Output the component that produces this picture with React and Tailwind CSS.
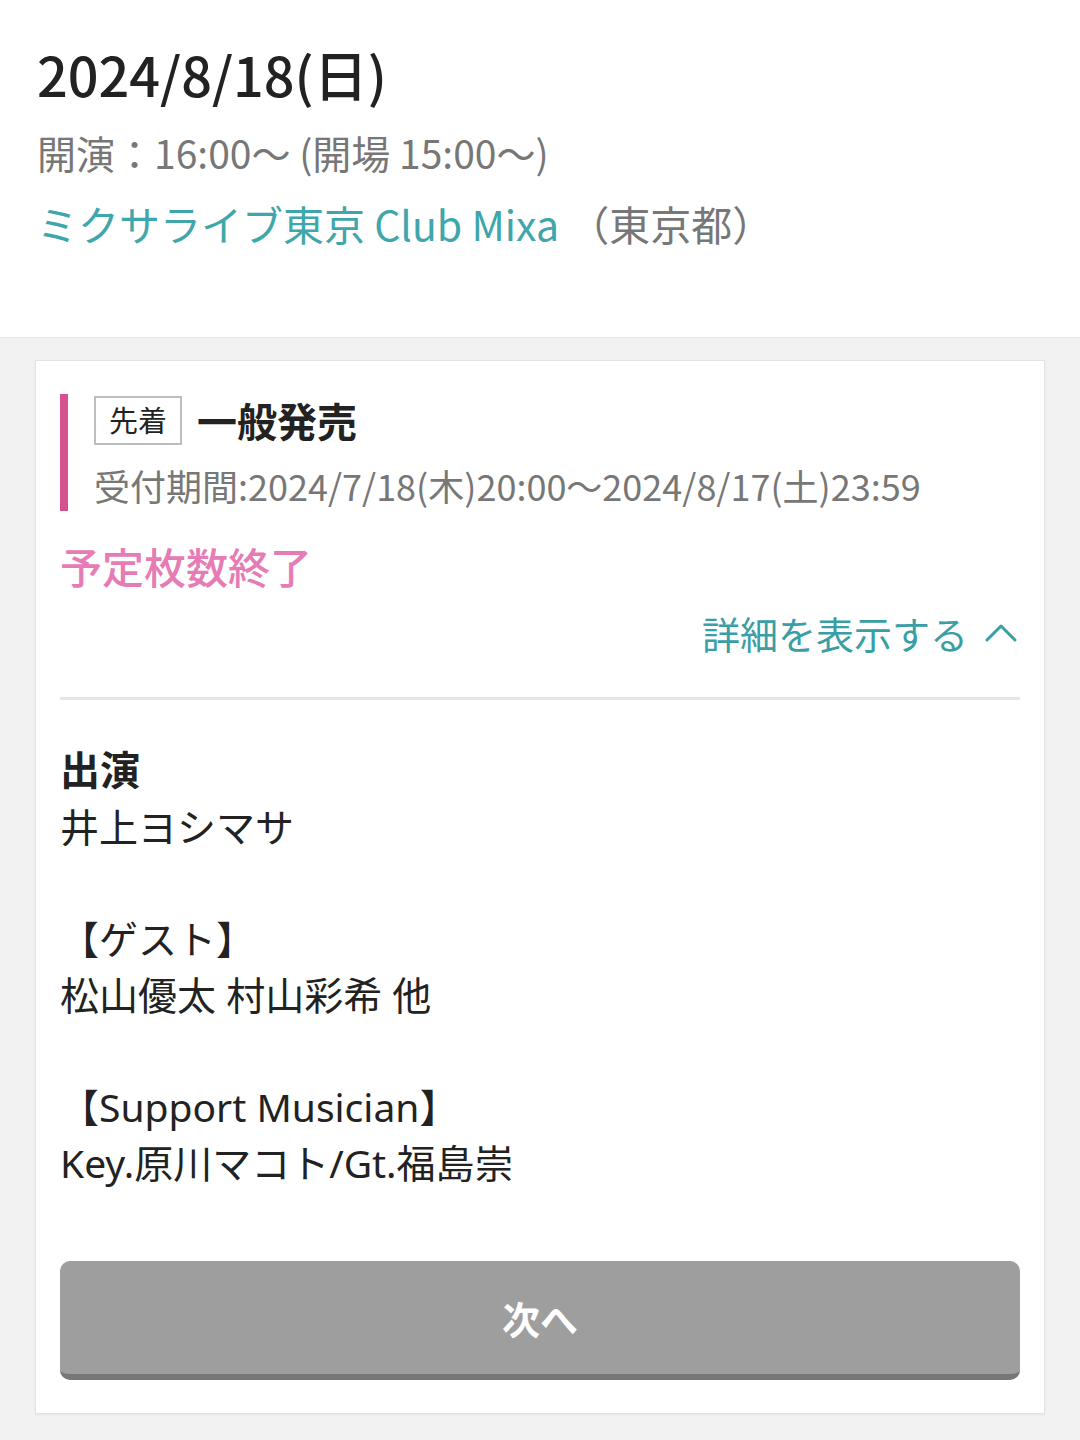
import React from 'react';

const jp = { fontFamily: '"Noto Sans CJK JP", "Noto Sans", sans-serif' };
const body = { fontFamily: '"Noto Sans", "Noto Sans CJK JP", sans-serif' };

const ChevronUp = () => (
  <svg width="34" height="24" viewBox="0 0 34 24" fill="none" className="ml-4">
    <path d="M3 19 L17 5 L31 19" stroke="#3a9ea5" strokeWidth="3" strokeLinecap="round" strokeLinejoin="round" />
  </svg>
);

export default function App() {
  return (
    <div className="w-[1080px] min-h-[1440px] bg-[#f2f2f2]" style={jp}>
      {/* event header */}
      <div className="bg-white pl-[37px] pt-[37px] h-[338px] border-b border-[#e6e6e6]">
        <h1 className="text-[54px] leading-[74px] font-medium text-[#222]">2024/8/18(日)</h1>
        <p className="text-[39px] leading-[52px] mt-[15px] text-[#777]">開演：16:00～ (開場 15:00～)</p>
        <p className="text-[41px] leading-[56px] mt-[17px]">
          <span className="text-[#3fa6ab]">ミクサライブ東京 Club Mixa</span>
          <span className="text-[#777]"> （東京都）</span>
        </p>
      </div>

      {/* ticket card */}
      <div className="pt-[22px] px-[35px] pb-[26px]">
        <div className="bg-white border border-[#e3e3e3] shadow-[0_1px_2px_rgba(0,0,0,0.06)] px-[24px] pt-[33px] pb-[33px]">
          <div className="flex">
            <div className="w-[8px] bg-[#d4508f] shrink-0" />
            <div className="pl-[26px] pt-[1px] pb-[2px]">
              <div className="flex items-center">
                <span className="border-2 border-[#bdbdbd] w-[88px] h-[49px] flex items-center justify-center text-[29px] text-[#222]">先着</span>
                <span className="ml-[15px] text-[40px] font-bold text-[#222] leading-[50px]">一般発売</span>
              </div>
              <p className="text-[36px] leading-[48px] mt-[16px] text-[#777]">受付期間:2024/7/18(木)20:00～2024/8/17(土)23:59</p>
            </div>
          </div>

          <p className="text-[42px] leading-[56px] font-medium text-[#e67cb5] mt-[27px]">予定枚数終了</p>

          <div className="flex justify-end items-center mt-[13px] pr-[2px]">
            <span className="text-[38px] leading-[52px] text-[#3a9ea5]">詳細を表示する</span>
            <ChevronUp />
          </div>

          <div className="h-[3px] bg-[#e6e6e6] mt-[38px]" />

          <div className="mt-[40px] text-[39px] leading-[56px] text-[#222]" style={body}>
            <p className="text-[40px] font-bold mb-[3px]" style={jp}>出演</p>
            <p>井上ヨシマサ</p>
            <p>&nbsp;</p>
            <p>【ゲスト】</p>
            <p>松山優太 村山彩希 他</p>
            <p>&nbsp;</p>
            <p>【Support Musician】</p>
            <p>Key.原川マコト/Gt.福島崇</p>
          </div>

          <button className="mt-[70px] w-full h-[119px] rounded-[10px] bg-[#9e9e9e] border-b-[6px] border-[#777] text-white text-[38px] font-bold flex items-center justify-center" style={jp}>
            次へ
          </button>
        </div>
      </div>
    </div>
  );
}
